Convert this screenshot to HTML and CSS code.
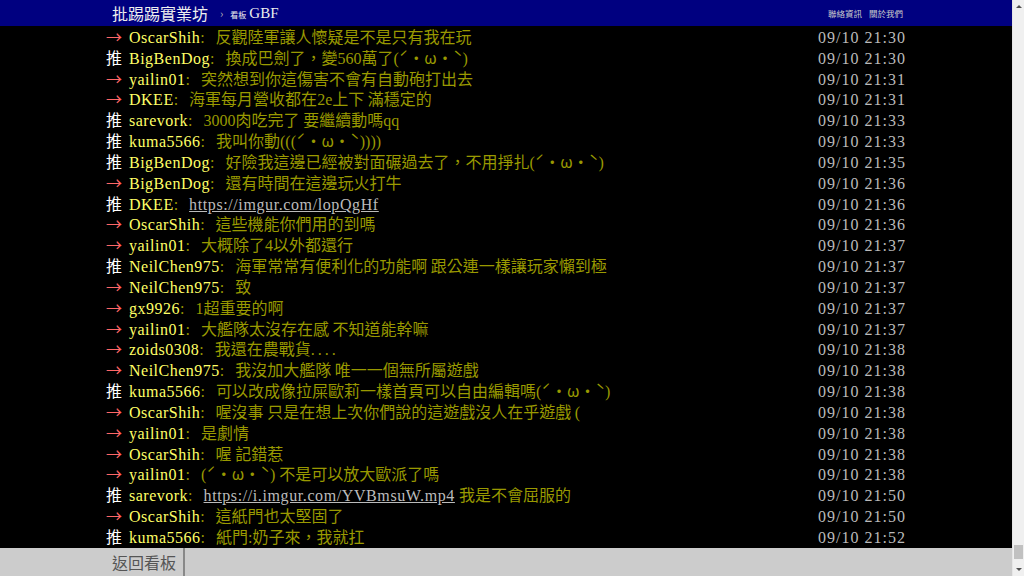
FILE: index.html
```html
<!DOCTYPE html>
<html lang="zh-Hant">
<head>
<meta charset="UTF-8" />
<title>[閒聊] GBF - 看板 GBF - 批踢踢實業坊</title>
<link rel="stylesheet" href="styles.css">
</head>
<body>
<div class="window">
  <div class="page">
    <div class="topbar">
      <div class="bar-inner">
        <a class="brand">批踢踢實業坊</a>
        <span class="sep">›</span>
        <a class="board"><span class="board-label">看板</span> <span class="board-name">GBF</span></a>
        <div class="links">
          <a>聯絡資訊</a>
          <a>關於我們</a>
        </div>
      </div>
    </div>

    <div class="main">
      <div class="push"><span class="tag arrow">→</span><span class="userid">OscarShih</span><span class="content"><span class="en colon">: </span>反觀陸軍讓人懷疑是不是只有我在玩</span><span class="time">09/10 21:30</span></div>
      <div class="push"><span class="tag good">推</span><span class="userid">BigBenDog</span><span class="content"><span class="en colon">: </span>換成巴劍了，變<span class="en">560</span>萬了<span class="en">(</span>ˊ・ω・ˋ<span class="en">)</span></span><span class="time">09/10 21:30</span></div>
      <div class="push"><span class="tag arrow">→</span><span class="userid">yailin01</span><span class="content"><span class="en colon">: </span>突然想到你這傷害不會有自動砲打出去</span><span class="time">09/10 21:31</span></div>
      <div class="push"><span class="tag arrow">→</span><span class="userid">DKEE</span><span class="content"><span class="en colon">: </span>海軍每月營收都在<span class="en">2e</span>上下 滿穩定的</span><span class="time">09/10 21:31</span></div>
      <div class="push"><span class="tag good">推</span><span class="userid">sarevork</span><span class="content"><span class="en colon">: </span><span class="en">3000</span>肉吃完了 要繼續動嗎<span class="en">qq</span></span><span class="time">09/10 21:33</span></div>
      <div class="push"><span class="tag good">推</span><span class="userid">kuma5566</span><span class="content"><span class="en colon">: </span>我叫你動<span class="en">(((</span>ˊ・ω・ˋ<span class="en">))))</span></span><span class="time">09/10 21:33</span></div>
      <div class="push"><span class="tag good">推</span><span class="userid">BigBenDog</span><span class="content"><span class="en colon">: </span>好險我這邊已經被對面碾過去了，不用掙扎<span class="en">(</span>ˊ・ω・ˋ<span class="en">)</span></span><span class="time">09/10 21:35</span></div>
      <div class="push"><span class="tag arrow">→</span><span class="userid">BigBenDog</span><span class="content"><span class="en colon">: </span>還有時間在這邊玩火打牛</span><span class="time">09/10 21:36</span></div>
      <div class="push"><span class="tag good">推</span><span class="userid">DKEE</span><span class="content"><span class="en colon">: </span><a class="en link">https://imgur.com/lopQgHf</a></span><span class="time">09/10 21:36</span></div>
      <div class="push"><span class="tag arrow">→</span><span class="userid">OscarShih</span><span class="content"><span class="en colon">: </span>這些機能你們用的到嗎</span><span class="time">09/10 21:36</span></div>
      <div class="push"><span class="tag arrow">→</span><span class="userid">yailin01</span><span class="content"><span class="en colon">: </span>大概除了<span class="en">4</span>以外都還行</span><span class="time">09/10 21:37</span></div>
      <div class="push"><span class="tag good">推</span><span class="userid">NeilChen975</span><span class="content"><span class="en colon">: </span>海軍常常有便利化的功能啊 跟公連一樣讓玩家懶到極</span><span class="time">09/10 21:37</span></div>
      <div class="push"><span class="tag arrow">→</span><span class="userid">NeilChen975</span><span class="content"><span class="en colon">: </span>致</span><span class="time">09/10 21:37</span></div>
      <div class="push"><span class="tag arrow">→</span><span class="userid">gx9926</span><span class="content"><span class="en colon">: </span><span class="en">1</span>超重要的啊</span><span class="time">09/10 21:37</span></div>
      <div class="push"><span class="tag arrow">→</span><span class="userid">yailin01</span><span class="content"><span class="en colon">: </span>大艦隊太沒存在感 不知道能幹嘛</span><span class="time">09/10 21:37</span></div>
      <div class="push"><span class="tag arrow">→</span><span class="userid">zoids0308</span><span class="content"><span class="en colon">: </span>我還在農戰貨<span class="en dots">....</span></span><span class="time">09/10 21:38</span></div>
      <div class="push"><span class="tag arrow">→</span><span class="userid">NeilChen975</span><span class="content"><span class="en colon">: </span>我沒加大艦隊 唯一一個無所屬遊戲</span><span class="time">09/10 21:38</span></div>
      <div class="push"><span class="tag good">推</span><span class="userid">kuma5566</span><span class="content"><span class="en colon">: </span>可以改成像拉屎歐莉一樣首頁可以自由編輯嗎<span class="en">(</span>ˊ・ω・ˋ<span class="en">)</span></span><span class="time">09/10 21:38</span></div>
      <div class="push"><span class="tag arrow">→</span><span class="userid">OscarShih</span><span class="content"><span class="en colon">: </span>喔沒事 只是在想上次你們說的這遊戲沒人在乎遊戲 <span class="en">(</span></span><span class="time">09/10 21:38</span></div>
      <div class="push"><span class="tag arrow">→</span><span class="userid">yailin01</span><span class="content"><span class="en colon">: </span>是劇情</span><span class="time">09/10 21:38</span></div>
      <div class="push"><span class="tag arrow">→</span><span class="userid">OscarShih</span><span class="content"><span class="en colon">: </span>喔 記錯惹</span><span class="time">09/10 21:38</span></div>
      <div class="push"><span class="tag arrow">→</span><span class="userid">yailin01</span><span class="content"><span class="en colon">: </span><span class="en">(</span>ˊ・ω・ˋ<span class="en">) </span>不是可以放大歐派了嗎</span><span class="time">09/10 21:38</span></div>
      <div class="push"><span class="tag good">推</span><span class="userid">sarevork</span><span class="content"><span class="en colon">: </span><a class="en link">https://i.imgur.com/YVBmsuW.mp4</a><span class="en"> </span>我是不會屈服的</span><span class="time">09/10 21:50</span></div>
      <div class="push"><span class="tag arrow">→</span><span class="userid">OscarShih</span><span class="content"><span class="en colon">: </span>這紙門也太堅固了</span><span class="time">09/10 21:50</span></div>
      <div class="push"><span class="tag good">推</span><span class="userid">kuma5566</span><span class="content"><span class="en colon">: </span>紙門<span class="en">:</span>奶子來，我就扛</span><span class="time">09/10 21:52</span></div>
    </div>

    <div class="footer">
      <div class="bar-inner">
        <a class="btn-back">返回看板</a>
      </div>
    </div>
  </div>

  <!-- 捲軸 -->
  <div class="scrollbar">
    <span class="sb-arrow up"></span>
    <div class="sb-track"><div class="sb-thumb"></div></div>
    <span class="sb-arrow down"></span>
  </div>
</div>
</body>
</html>
```

FILE: styles.css
```css
* {
  margin: 0;
  padding: 0;
  box-sizing: border-box;
}

body {
  background: #000;
  color: #ccc;
  font-family: "Noto Sans CJK TC", sans-serif;
  overflow: hidden;
}

a {
  color: inherit;
  text-decoration: none;
}

.window {
  display: flex;
  height: 576px;
}

.page {
  flex: 1;
  display: flex;
  flex-direction: column;
  min-width: 0;
}

.bar-inner {
  width: 800px;
  margin: 0 auto;
  height: 100%;
  display: flex;
  align-items: center;
}

/* 上方導覽列 */
.topbar {
  height: 26px;
  background: #000080;
  flex-shrink: 0;
}

.brand {
  font-size: 16px;
  color: #eee;
  padding-left: 6px;
}

.sep {
  color: #bbb;
  font-size: 11px;
  margin: 0 7px 0 12px;
}

.board {
  display: flex;
  align-items: baseline;
  color: #eee;
}

.board-label {
  font-size: 8px;
  margin-right: 3px;
}

.board-name {
  font-family: "Liberation Serif", serif;
  font-size: 15px;
}

.links {
  margin-left: auto;
  display: flex;
  gap: 7px;
  font-size: 8.5px;
  color: #ccc;
  padding-right: 3px;
}

/* 推文 */
.main {
  flex: 1;
  overflow: hidden;
}

.push {
  width: 800px;
  margin: 0 auto;
  height: 20.83px;
  line-height: 20.83px;
  display: flex;
  align-items: baseline;
  white-space: nowrap;
  font-size: 16px;
}

.tag {
  width: 23px;
  flex-shrink: 0;
}

.tag.arrow {
  color: #f66;
}

.tag.good {
  color: #fff;
}

.userid,
.time,
.en {
  font-family: "Liberation Serif", serif;
  font-size: 16px;
}

.userid {
  color: #ff6;
  letter-spacing: 0.5px;
}

.en.colon {
  letter-spacing: 3.5px;
}

.en.dots {
  letter-spacing: 3px;
}

.content {
  color: #990;
}

.link {
  color: #bbb;
  text-decoration: underline;
  letter-spacing: 0.6px;
}

.time {
  margin-left: auto;
  color: #bbb;
  letter-spacing: 1px;
}

/* 下方按鈕列 */
.footer {
  height: 28px;
  background: #ccc;
  flex-shrink: 0;
}

.btn-back {
  height: 100%;
  display: flex;
  align-items: center;
  padding: 0 7px 0 6px;
  font-size: 16px;
  color: #555;
  border-right: 2px solid #888;
}

/* 捲軸 */
.scrollbar {
  width: 12px;
  background: #f0f0f0;
  display: flex;
  flex-direction: column;
  align-items: center;
  border-left: 1px solid #e6e6e6;
}

.sb-track {
  flex: 1;
  width: 100%;
  display: flex;
  flex-direction: column;
  justify-content: flex-end;
  padding-bottom: 4px;
}

.sb-thumb {
  height: 14px;
  margin: 0 1px;
  background: #c1c1c1;
}

.sb-arrow {
  width: 0;
  height: 0;
  border-left: 3px solid transparent;
  border-right: 3px solid transparent;
  margin: 5px 0;
}

.sb-arrow.up {
  border-bottom: 3px solid #505050;
}

.sb-arrow.down {
  border-top: 3px solid #505050;
}
```
